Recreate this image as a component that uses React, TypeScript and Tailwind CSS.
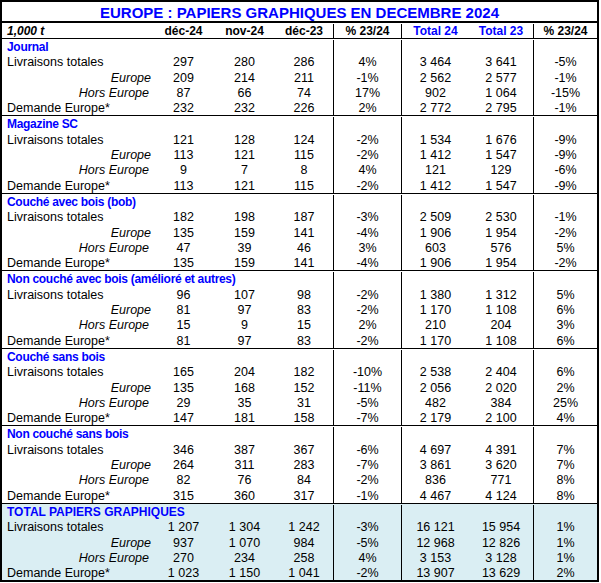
const sections = [
  {
    title: "Journal",
    rows: [
      ["297", "280", "286", "4%", "3 464", "3 641", "-5%"],
      ["209", "214", "211", "-1%", "2 562", "2 577", "-1%"],
      ["87", "66", "74", "17%", "902", "1 064", "-15%"],
      ["232", "232", "226", "2%", "2 772", "2 795", "-1%"],
    ],
  },
  {
    title: "Magazine SC",
    rows: [
      ["121", "128", "124", "-2%", "1 534", "1 676", "-9%"],
      ["113", "121", "115", "-2%", "1 412", "1 547", "-9%"],
      ["9", "7", "8", "4%", "121", "129", "-6%"],
      ["113", "121", "115", "-2%", "1 412", "1 547", "-9%"],
    ],
  },
  {
    title: "Couché avec bois (bob)",
    rows: [
      ["182", "198", "187", "-3%", "2 509", "2 530", "-1%"],
      ["135", "159", "141", "-4%", "1 906", "1 954", "-2%"],
      ["47", "39", "46", "3%", "603", "576", "5%"],
      ["135", "159", "141", "-4%", "1 906", "1 954", "-2%"],
    ],
  },
  {
    title: "Non couché avec bois (amélioré et autres)",
    rows: [
      ["96", "107", "98", "-2%", "1 380", "1 312", "5%"],
      ["81", "97", "83", "-2%", "1 170", "1 108", "6%"],
      ["15", "9", "15", "2%", "210", "204", "3%"],
      ["81", "97", "83", "-2%", "1 170", "1 108", "6%"],
    ],
  },
  {
    title: "Couché sans bois",
    rows: [
      ["165", "204", "182", "-10%", "2 538", "2 404", "6%"],
      ["135", "168", "152", "-11%", "2 056", "2 020", "2%"],
      ["29", "35", "31", "-5%", "482", "384", "25%"],
      ["147", "181", "158", "-7%", "2 179", "2 100", "4%"],
    ],
  },
  {
    title: "Non couché sans bois",
    rows: [
      ["346", "387", "367", "-6%", "4 697", "4 391", "7%"],
      ["264", "311", "283", "-7%", "3 861", "3 620", "7%"],
      ["82", "76", "84", "-2%", "836", "771", "8%"],
      ["315", "360", "317", "-1%", "4 467", "4 124", "8%"],
    ],
  },
  {
    title: "TOTAL PAPIERS GRAPHIQUES",
    total: true,
    rows: [
      ["1 207", "1 304", "1 242", "-3%", "16 121", "15 954", "1%"],
      ["937", "1 070", "984", "-5%", "12 968", "12 826", "1%"],
      ["270", "234", "258", "4%", "3 153", "3 128", "1%"],
      ["1 023", "1 150", "1 041", "-2%", "13 907", "13 629", "2%"],
    ],
  },
];

const labels = [
  { text: "Livraisons totales", cls: "pl-[5px] text-left" },
  { text: "Europe", cls: "pr-[2px] text-right italic" },
  { text: "Hors Europe", cls: "pr-[4px] text-right italic" },
  { text: "Demande Europe*", cls: "pl-[5px] text-left" },
];

const grid = "grid grid-cols-[151px_61px_61px_58px_68px_68px_64px_64px]";
const line = "border-l border-black";
const row = "h-[15.3px] leading-[15.3px] pt-[1px]";

const Section = ({ s, first }: { s: any; first: boolean }) => (
  <div className={`${first ? "" : "border-t border-black"} ${s.total ? "bg-[#daeef3]" : ""}`}>
    <div className={`${grid} ${row}`}>
      <div className={`col-span-4 pl-[5px] text-[12px] font-bold text-[#0000ff] whitespace-nowrap ${s.total ? "" : "tracking-[-0.3px]"}`}>
        {s.title}
      </div>
      <div className={line}></div>
      <div className={line}></div>
      <div></div>
      <div className={line}></div>
    </div>
    {s.rows.map((r: string[], i: number) => (
      <div key={i} className={`${grid} ${row}`}>
        <div className={`${labels[i].cls} whitespace-nowrap`}>{labels[i].text}</div>
        <div className="text-center">{r[0]}</div>
        <div className="text-center">{r[1]}</div>
        <div className="text-center">{r[2]}</div>
        <div className={`text-center ${line}`}>{r[3]}</div>
        <div className={`text-center ${line}`}>{r[4]}</div>
        <div className="text-center">{r[5]}</div>
        <div className={`text-center ${line}`}>{r[6]}</div>
      </div>
    ))}
  </div>
);

const App = () => {
  return (
    <div className="w-[601px] h-[583px] bg-white" style={{ fontFamily: '"Liberation Sans", Arial, sans-serif' }}>
      <div className="w-[599px] border-2 border-black text-[12.5px] text-black">
        <div className="h-[21px] border-b-2 border-black pt-[1px] text-center text-[15px] font-bold leading-[20px] text-[#0000ff]">
          EUROPE : PAPIERS GRAPHIQUES EN DECEMBRE 2024
        </div>
        <div className={`${grid} h-[16px] pt-[1px] leading-[15px] border-b border-black text-[12px] font-bold`}>
          <div className="pl-[5px] italic">1,000 t</div>
          <div className="text-center">déc-24</div>
          <div className="text-center">nov-24</div>
          <div className="text-center">déc-23</div>
          <div className={`text-center ${line}`}>% 23/24</div>
          <div className={`text-center text-[#0000ff] ${line}`}>Total 24</div>
          <div className="text-center text-[#0000ff]">Total 23</div>
          <div className={`text-center ${line}`}>% 23/24</div>
        </div>
        {sections.map((s, i) => (
          <Section key={i} s={s} first={i === 0} />
        ))}
      </div>
    </div>
  );
};

export default App;
